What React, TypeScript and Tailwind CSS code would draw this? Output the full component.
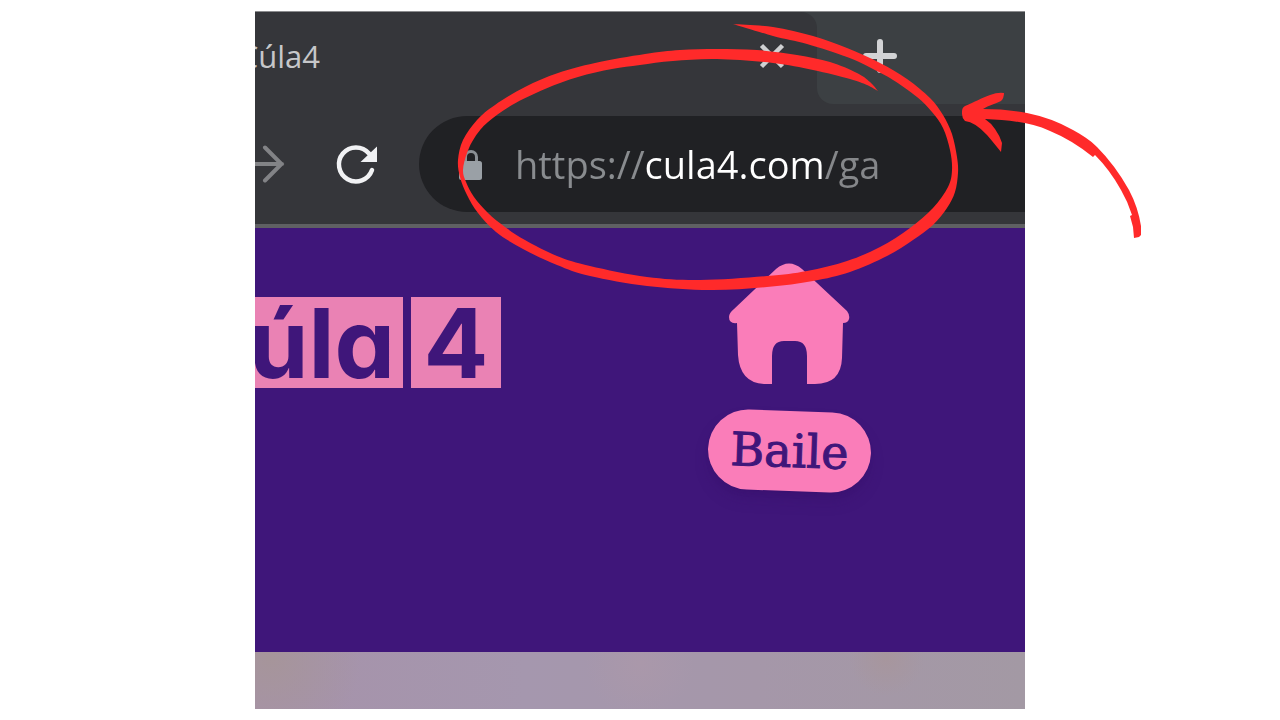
type Point = [number, number];

const CIRCLE_OUTER: Point[] = [
  [733, 24], [773, 27], [813, 36], [847, 48], [880, 63], [907, 79], [930, 98],
  [943, 115], [952, 134], [957, 157], [958, 173], [955, 192], [947, 208],
  [933, 225], [913, 240], [887, 256], [850, 272], [813, 281], [767, 287],
  [710, 290], [647, 286], [590, 276], [557, 265], [523, 249], [496, 232],
  [478, 213], [467, 195], [460, 177], [458, 160], [463, 140], [477, 120],
  [495, 105], [525, 87], [558, 73], [595, 63], [645, 54], [680, 50],
  [717, 49], [757, 50], [797, 55], [830, 62], [857, 73], [870, 82], [878, 91],
];

const CIRCLE_INNER: Point[] = [
  [878, 91], [867, 85], [850, 79], [813, 70], [773, 63], [717, 59], [673, 61],
  [640, 65], [612, 69], [578, 77], [545, 89], [512, 105], [488, 122],
  [475, 137], [467, 153], [463, 170], [466, 182], [474, 197], [488, 213],
  [505, 227], [525, 240], [557, 256], [590, 266], [647, 277], [700, 280],
  [767, 276], [807, 271], [847, 261], [880, 247], [910, 228], [933, 208],
  [948, 187], [952, 170], [950, 150], [943, 128], [932, 112], [917, 97],
  [893, 80], [873, 69], [847, 57], [807, 44], [773, 36], [733, 24],
];

// Catmull-Rom spline through the points, as bezier segments
function curve(points: Point[]) {
  return points
    .slice(0, -1)
    .map((p1, i) => {
      const p0 = points[i - 1] ?? p1;
      const p2 = points[i + 1];
      const p3 = points[i + 2] ?? p2;
      const c1 = [p1[0] + (p2[0] - p0[0]) / 6, p1[1] + (p2[1] - p0[1]) / 6];
      const c2 = [p2[0] - (p3[0] - p1[0]) / 6, p2[1] - (p3[1] - p1[1]) / 6];
      return `C${c1.join(" ")} ${c2.join(" ")} ${p2.join(" ")}`;
    })
    .join("");
}

const CIRCLE_PATH = `M733 24${curve(CIRCLE_OUTER)}${curve(CIRCLE_INNER)}Z`;

function Annotation() {
  return (
    <svg
      aria-hidden="true"
      viewBox="255 12 900 290"
      className="pointer-events-none absolute top-0 left-0 h-[290px] w-[900px] max-w-none fill-[#ff2a2a]"
    >
      <path d={CIRCLE_PATH} />
      <path d="M962 114C962 110 962 108 965 106C975 102 981 98 990 95Q998 92 1004 93Q1004 98 1001 101C995 104 989 105 983 109Q1006 109 1027 113Q1052 118 1073 130C1082 135 1090 140 1097 147Q1115 165 1129 190Q1138 207 1141 226L1141 235L1139 237L1134 238L1133 227L1130 216L1132 215Q1128 202 1121 190Q1110 170 1095 155L1093 157Q1072 140 1050 131C1030 122 1008 120 985 119Q991 123 995 129Q1000 136 1002 143L1001 152Q993 142 987 135Q975 122 965 121Q962 118 962 114Z" />
    </svg>
  );
}

function TabStrip() {
  return (
    <div className="flex h-[92px] bg-[linear-gradient(#3c4043_50%,#35363a_50%)]">
      <div className="flex min-w-0 flex-1 items-center justify-between rounded-tr-2xl bg-[#35363a] pr-8 pb-1">
        <div className="flex w-[65px] justify-end overflow-hidden">
          <span className="text-[31px] leading-10 text-[#c6c7c9]">Cúla4</span>
        </div>
        <button type="button" aria-label="Close tab">
          <svg viewBox="0 0 26 26" className="size-[26px] stroke-[#cfd0d2]" strokeWidth="4.500">
            <path d="M2.500 2.500L23.500 23.500M23.500 2.500L2.500 23.500" />
          </svg>
        </button>
      </div>
      <div className="flex w-52 items-center rounded-bl-2xl bg-[#3c4043] pb-1 pl-11">
        <button type="button" aria-label="New tab">
          <svg viewBox="0 0 38 38" className="size-[38px] stroke-[#d2d3d5]" strokeWidth="6" strokeLinecap="round">
            <path d="M19 5V33M5 19H33" />
          </svg>
        </button>
      </div>
    </div>
  );
}

function Toolbar() {
  return (
    <div className="flex items-center border-b-4 border-[#5f6063] bg-[#35363a] py-3">
      <button type="button" aria-label="Forward">
        <svg viewBox="0 0 32 40" className="h-10 w-8 fill-none stroke-[#828386]" strokeWidth="4" strokeLinecap="round">
          <path d="M-2 20H27M10 3.500L26.500 20L10 36.500" />
        </svg>
      </button>
      <button type="button" aria-label="Reload" className="ml-12">
        <svg viewBox="0 0 44 44" className="size-11">
          <path
            d="M37 28A17 17 0 1 1 34 11.500"
            className="fill-none stroke-[#f1f2f4]"
            strokeWidth="4.500"
            strokeLinecap="round"
          />
          <path d="M42 4.500V20H25.500Z" className="fill-[#f1f2f4]" />
        </svg>
      </button>
      <div className="ml-10 flex h-24 min-w-0 flex-1 items-center rounded-l-full bg-[#202124] pl-10">
        <svg aria-hidden="true" viewBox="0 0 24 32" className="h-8 w-6 shrink-0">
          <path d="M6.500 14V9A5.500 5.500 0 0 1 17.500 9V14" className="fill-none stroke-[#8b9095]" strokeWidth="3" />
          <rect y="13" width="23" height="19" rx="2.500" className="fill-[#9aa0a6]" />
        </svg>
        <input
          type="text"
          aria-label="Address"
          defaultValue="https://cula4.com/ga"
          className="ml-8 h-16 min-w-0 flex-1 bg-[linear-gradient(90deg,#898c8f_130px,#fff_130px,#fff_309px,#85878a_309px)] bg-clip-text text-[38px] leading-[64px] text-transparent caret-white outline-none"
        />
      </div>
    </div>
  );
}

function Logo() {
  return (
    <a
      href="#cula4"
      className="mt-[69px] flex gap-2 font-[Inter,'Liberation_Sans',sans-serif] text-[96px] leading-[92px] font-bold text-[#3f167a] [font-feature-settings:'cv11']"
    >
      <span className="flex h-[91px] w-[148px] justify-end overflow-hidden bg-[#ea82b4] pr-2">
        Cúla
      </span>
      <span className="h-[91px] w-[90px] bg-[#ea82b4] text-center">4</span>
    </a>
  );
}

function HomeLink() {
  return (
    <a href="#baile" className="mt-[35px] flex flex-col items-center">
      <svg aria-hidden="true" viewBox="729 263 122 122" className="size-[122px] fill-[#fa7db9]">
        <path d="M776 269Q789 258 802 269L847 311Q850 315 849 319Q848 323 843 323L842 358Q841 384 815 384H807V356Q807 341 795 341H784Q772 341 772 356V384H766Q740 384 738 355L737 323Q729 324 729 317Q729 313 734 309Z" />
      </svg>
      <span className="mt-[26px] flex h-20 w-[163px] rotate-2 items-center justify-center rounded-full bg-[#fa7db9] font-['DejaVu_Serif',serif] text-[46px] leading-[84px] text-[#3f167a] shadow-lg shadow-[#371069]/40 [-webkit-text-stroke:1px_#3f167a]">
        Baile
      </span>
    </a>
  );
}

export default function App() {
  return (
    <main className="min-h-screen overflow-hidden bg-white font-['Open_Sans','Noto_Sans',sans-serif]">
      <div className="relative mx-auto mt-[11px] w-full max-w-[770px] border-t border-[#8b8c8e]">
        <div className="overflow-hidden">
          <TabStrip />
          <Toolbar />
          <header className="flex min-h-[424px] items-start gap-[207px] bg-[#3f167a]">
            <Logo />
            <HomeLink />
          </header>
          <div className="h-[57px] bg-[radial-gradient(circle_at_2%_10%,#a6959a,transparent_12%),radial-gradient(circle_at_82%_10%,#a7969d,transparent_6%),radial-gradient(circle_at_50%_20%,#aa98aa,transparent_14%),linear-gradient(90deg,#a692aa,#a597ae_35%,#a597a9_65%,#a399a4)]" />
        </div>
        <Annotation />
      </div>
    </main>
  );
}
